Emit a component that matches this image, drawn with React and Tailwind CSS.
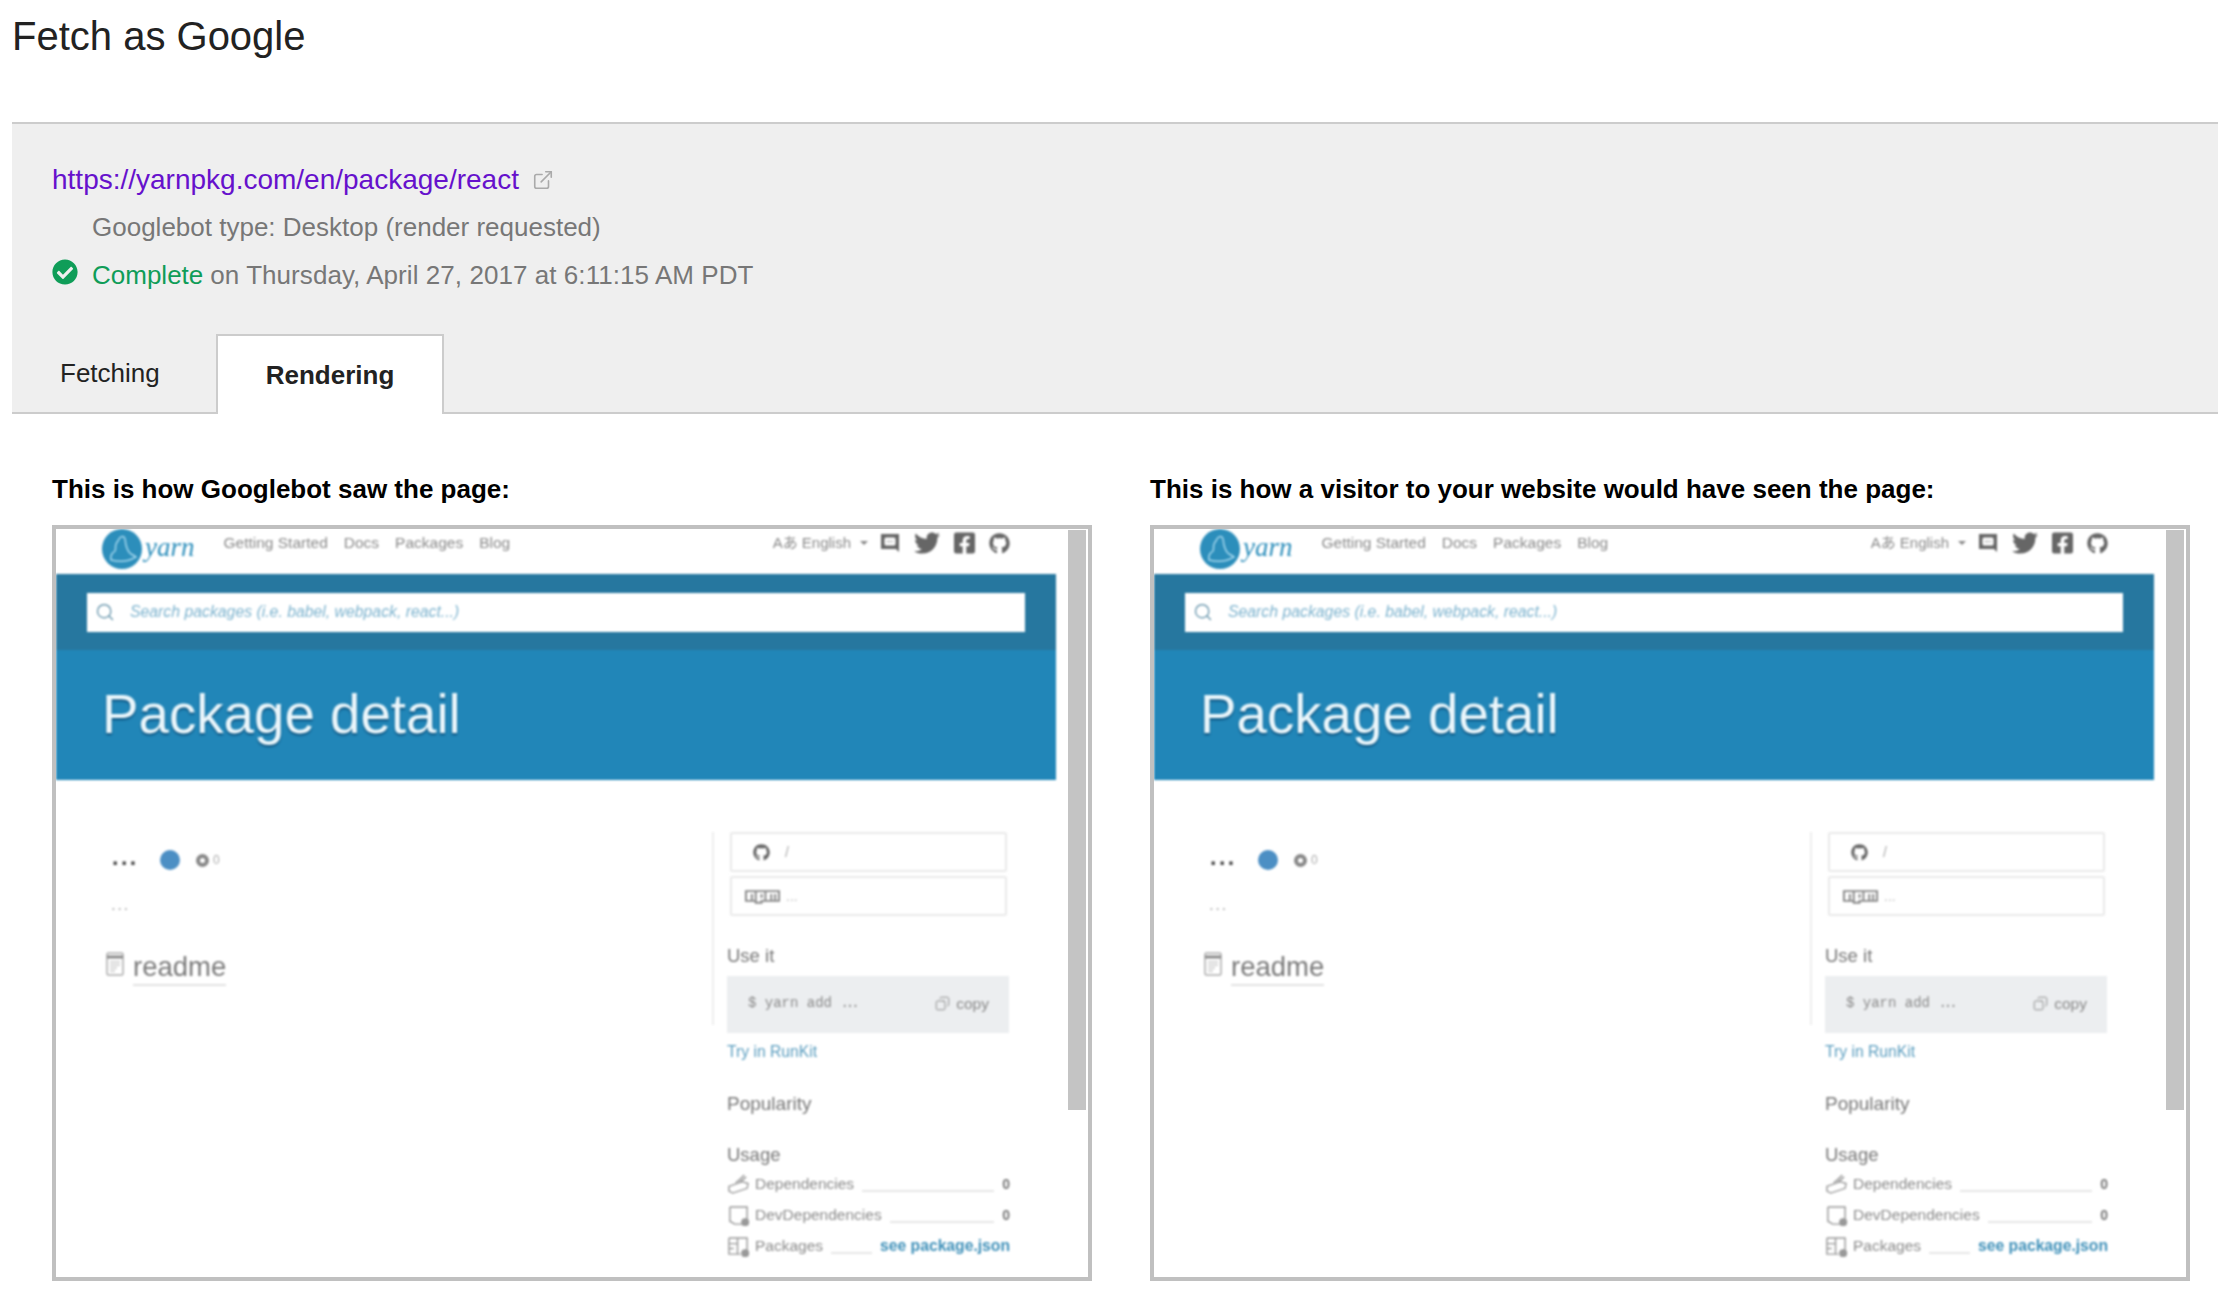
import React from "react";
import { FaTwitter, FaFacebookSquare, FaGithub, FaCheckCircle, FaNpm } from "react-icons/fa";
import { ExternalLink, Search, Copy } from "lucide-react";

function YarnCat() {
  return (
    <svg viewBox="0 0 40 40" className="w-10 h-10 shrink-0">
      <circle cx="20" cy="20" r="20" fill="#2c8ebb" />
      <path d="M9 31c-1-4 1-7 4-9 1-2 0-4 1-7 1-2 2-3 3-5 1-2 3-3 5-2 2 2 1 5 2 8 1 4 2 7 5 9 2 1 4 2 5 3-4 2-7 4-12 4-5 1-9 0-13-1z" fill="none" stroke="#a6d8ee" strokeWidth="1.5" />
    </svg>
  );
}

function Discourse() {
  return (
    <svg viewBox="0 0 20 20" className="w-5 h-5">
      <path d="M1 1h18v18l-3-3H1z" fill="#666" />
      <rect x="4.5" y="4.5" width="11" height="8" rx="1.5" fill="#fff" />
      <path d="M7 8.5h6" stroke="#999" strokeWidth="1.5" strokeDasharray="1.5 1" />
    </svg>
  );
}

function DepIcon() {
  return (
    <svg viewBox="0 0 24 22" className="w-[23px] h-[21px] shrink-0" fill="none" stroke="#999" strokeWidth="1.5">
      <path d="M2 13l14-5 6 2-1 5-15 5-4-2z" />
      <path d="M9 9c3-1 5-4 9-8M13 9l7-6" />
    </svg>
  );
}

function DevIcon() {
  return (
    <svg viewBox="0 0 24 22" className="w-[23px] h-[21px] shrink-0" fill="none" stroke="#999" strokeWidth="1.5">
      <path d="M3 2h18v14M3 2v15l5 3h8" />
      <circle cx="19" cy="18" r="3.5" fill="#999" />
    </svg>
  );
}

function PkgIcon() {
  return (
    <svg viewBox="0 0 24 22" className="w-[23px] h-[21px] shrink-0" fill="none" stroke="#999" strokeWidth="1.5">
      <path d="M2 2h19v13M2 2v17h12M11 2v17M2 8h9M2 13h5" />
      <circle cx="19" cy="18" r="3.5" fill="#999" />
    </svg>
  );
}

function ReadmeIcon() {
  return (
    <svg viewBox="0 0 18 24" className="w-[18px] h-6 shrink-0" fill="none">
      <rect x="1" y="1" width="16" height="22" rx="1.5" stroke="#aaa" strokeWidth="1.5" />
      <path d="M1 5h16" stroke="#888" strokeWidth="3" />
      <path d="M4 10h10M4 13h10M4 16h7M4 19h5" stroke="#ccc" strokeWidth="1.5" />
    </svg>
  );
}

function UsageRow({ icon, label, children, gap }) {
  return (
    <div className={`flex items-center h-5 ${gap}`}>
      {icon}
      <span className="ml-[5px] text-[15.5px] text-[#8a8a8a] whitespace-nowrap">{label}</span>
      <span className="flex-1 ml-2 mr-2 h-2 mt-2 border-b-2 border-[#e6e6e6]" />
      {children}
    </div>
  );
}

function Shot() {
  return (
    <div className="w-[1000px] shrink-0 blur-[0.8px]">
      <div className="flex items-start h-[45px] pl-[46px] overflow-hidden">
        <YarnCat />
        <span className="ml-[3px] mt-[1px] text-[27px] leading-[34px] italic font-['Liberation_Serif',serif] text-[#2c8ebb]">yarn</span>
        <nav className="flex ml-[29px] mt-[3px] text-[15.5px] leading-[22px] text-[#8a8a8a]">
          <span>Getting Started</span>
          <span className="ml-[16px]">Docs</span>
          <span className="ml-[16px]">Packages</span>
          <span className="ml-[16px]">Blog</span>
        </nav>
        <div className="flex items-center ml-auto mr-[46px] mt-[3px] h-[22px] text-[15px] text-[#8a8a8a]">
          <span className="font-['Liberation_Sans','Noto_Sans_CJK_JP',sans-serif] whitespace-nowrap">Aあ English</span>
          <span className="ml-[9px] mr-[12px] border-x-[4px] border-t-[4px] border-x-transparent border-t-[#888]" />
          <Discourse />
          <FaTwitter className="w-[28px] h-[26px] ml-[13px] text-[#666]" />
          <FaFacebookSquare className="w-[23px] h-[24px] ml-[12px] text-[#666]" />
          <FaGithub className="w-[21px] h-[21px] ml-[13px] text-[#666]" />
        </div>
      </div>
      <div className="h-[206px] bg-[#2186b8]">
        <div className="h-[76px] bg-[#26779f] pt-[19px] px-[31px]">
          <div className="flex items-center h-[39px] bg-white pl-2 pb-[2px]">
            <Search className="w-5 h-5 text-[#5a8ca5]" strokeWidth={1.5} />
            <span className="ml-[15px] text-[15.8px] italic text-[#7eb4cf]">Search packages (i.e. babel, webpack, react...)</span>
          </div>
        </div>
        <div className="flex items-center h-[128px] pl-[46px] text-[54.7px] text-[#eaf6fb] [text-shadow:0_2px_2px_rgba(0,50,90,0.6)]">Package detail</div>
      </div>
      <div className="flex h-[497px]">
        <div className="w-[656px] shrink-0 pl-[53px] pt-[70px]">
          <div className="flex items-center h-5">
            <span className="ml-[3px] w-[28px] text-[23px] leading-5 font-bold tracking-[2.5px] text-[#444] -mt-[6px]">...</span>
            <span className="ml-[20px] w-5 h-5 rounded-full bg-[#4c8fc4]" />
            <span className="ml-[16px] w-[13px] h-[13px] rounded-full border-[4px] border-[#888]" />
            <span className="ml-1 text-[12px] text-[#aaa]">0</span>
          </div>
          <div className="ml-[2px] mt-[29px] h-[15px] text-[17px] leading-[12px] tracking-[1.5px] text-[#aaa]">...</div>
          <div className="flex items-start mt-[38px] -ml-[3px]">
            <ReadmeIcon />
            <span className="ml-[9px] text-[27.5px] leading-[30px] h-[34px] text-[#7a7a7a] border-b-2 border-[#e2e2e2]">readme</span>
          </div>
        </div>
        <div className="w-[298px] pt-[50px]">
          <div className="h-[193px] border-l-2 border-[#eeeeee] pl-[13px]">
            <div className="ml-[3px] mt-[2px] w-[277px] h-10 flex items-center pl-[21px] border-2 border-[#eaeaea] rounded-[2px]">
              <FaGithub className="w-[17px] h-[17px] text-[#666]" />
              <span className="ml-[15px] text-[14px] text-[#aaa]">/</span>
            </div>
            <div className="ml-[3px] mt-1 w-[277px] h-10 flex items-center pl-[13px] border-2 border-[#eaeaea] rounded-[2px]">
              <FaNpm className="w-[35px] h-[32px] text-[#888]" />
              <span className="ml-[6px] text-[14px] text-[#bbb]">...</span>
            </div>
            <div className="mt-[28px] text-[18.5px] leading-6 text-[#777]">Use it</div>
            <div className="flex items-center justify-between mt-2 h-[57px] w-[282px] bg-[#eceef0] pl-[21px] pr-5 pb-[2px]">
              <span className="font-['Liberation_Mono',monospace] text-[14px] text-[#8a8a8a]">$ yarn add <span className="tracking-[-3px]">...</span></span>
              <span className="flex items-center text-[15.5px] text-[#8a8a8a]">
                <Copy className="w-[15px] h-[17px] mr-[6px] -scale-x-100" strokeWidth={1.5} />
                copy
              </span>
            </div>
          </div>
          <div className="mt-[17px] pl-[15px] text-[15.7px] leading-5 text-[#5a9dbf]">Try in RunKit</div>
          <div className="mt-[30px] pl-[15px] text-[19px] leading-6 text-[#777]">Popularity</div>
          <div className="mt-[27px] pl-[15px] text-[18.5px] leading-6 text-[#777]">Usage</div>
          <div className="pl-[15px]">
            <UsageRow icon={<DepIcon />} label="Dependencies" gap="mt-[7px]">
              <span className="text-[14px] font-bold text-[#777]">0</span>
            </UsageRow>
            <UsageRow icon={<DevIcon />} label="DevDependencies" gap="mt-[11px]">
              <span className="text-[14px] font-bold text-[#777]">0</span>
            </UsageRow>
            <UsageRow icon={<PkgIcon />} label="Packages" gap="mt-[11px]">
              <span className="text-[15.7px] font-bold text-[#3d8fb8] whitespace-nowrap">see package.json</span>
            </UsageRow>
          </div>
        </div>
      </div>
    </div>
  );
}

function Frame() {
  return (
    <div className="flex w-[1040px] h-[756px] border-4 border-[#c0c0c0] overflow-hidden">
      <Shot />
      <div className="w-[18px] h-[580px] mt-px ml-3 bg-[#c4c4c4] shrink-0" />
    </div>
  );
}

export default function App() {
  return (
    <div className="w-[2218px] h-[1302px] overflow-hidden bg-white pl-3 font-['Liberation_Sans',Arial,sans-serif]">
      <h1 className="h-[122px] pt-[12px] text-[40px] leading-[48px] font-normal text-[#222]">Fetch as Google</h1>
      <section className="h-[292px] bg-[#efefef] border-y-2 border-[#cccccc] flex flex-col">
        <div className="h-[210px] pl-10 pt-[36px]">
          <div className="flex items-center h-10 text-[28px] text-[#6611cc]">
            <span>https://yarnpkg.com/en/package/react</span>
            <ExternalLink className="w-[22px] h-[22px] ml-[13px] text-[#aaaaaa]" strokeWidth={1.75} />
          </div>
          <div className="h-10 mt-[7px] pl-10 text-[26px] leading-10 text-[#777777]">Googlebot type: Desktop (render requested)</div>
          <div className="flex h-10 mt-2 text-[26px] leading-10 text-[#777777]">
            <FaCheckCircle className="w-[26px] h-[26px] mt-[4px] text-[#0f9d58]" />
            <span className="ml-[14px] text-[#0f9d58]">Complete</span>
            <span className="ml-[7px] tracking-[0.06px]">on Thursday, April 27, 2017 at 6:11:15 AM PDT</span>
          </div>
        </div>
        <div className="flex h-[80px] -mb-[2px]">
          <div className="w-[204px] pl-[48px] text-[26px] leading-[78px] text-[#222]">Fetching</div>
          <div className="w-[228px] h-[80px] bg-white border-2 border-b-0 border-[#cccccc] text-center text-[26px] leading-[78px] font-bold text-[#222]">Rendering</div>
        </div>
      </section>
      <div className="flex pl-10 pt-[55px]">
        <div className="w-[1098px] shrink-0">
          <h2 className="h-[44px] text-[26px] leading-10 font-bold text-black whitespace-nowrap">This is how Googlebot saw the page:</h2>
          <div className="mt-3"><Frame /></div>
        </div>
        <div className="shrink-0">
          <h2 className="h-[44px] text-[26px] leading-10 font-bold text-black whitespace-nowrap">This is how a visitor to your website would have seen the page:</h2>
          <div className="mt-3"><Frame /></div>
        </div>
      </div>
    </div>
  );
}
